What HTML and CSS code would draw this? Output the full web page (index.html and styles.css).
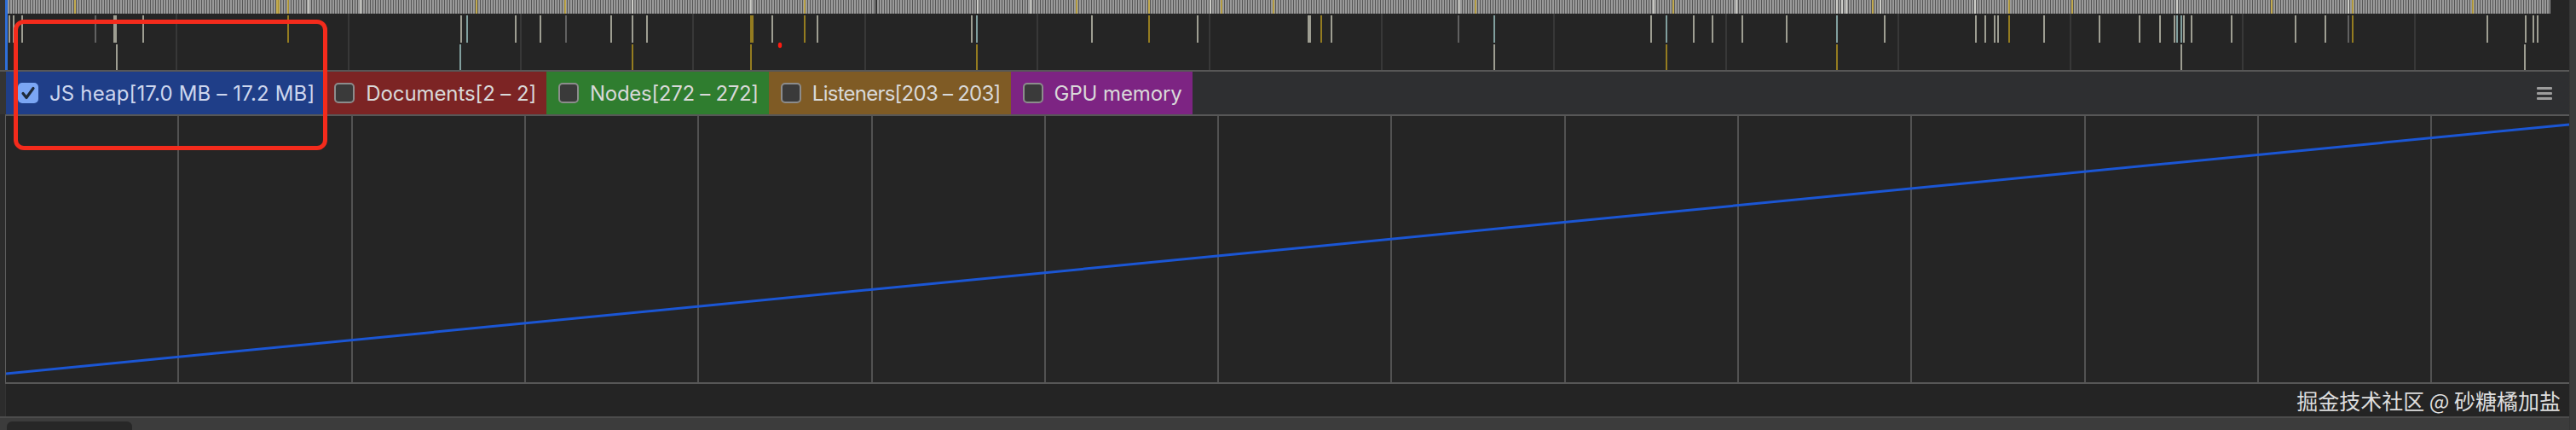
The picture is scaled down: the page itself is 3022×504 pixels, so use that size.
FILE: index.html
```html
<!DOCTYPE html>
<html lang="zh">
<head>
<meta charset="utf-8">
<title>Memory panel</title>
<link rel="stylesheet" href="styles.css">
</head>
<body>
<div class="page">
  <div class="main">
    <div class="timeline">
      <div class="timeline-edge"></div>
      <div class="timeline-cursor"></div>
      <svg class="timeline-canvas" width="3005" height="82" viewBox="9 0 3005 82">
        <defs>
          <pattern id="stripes" x="0" y="0" width="3" height="16" patternUnits="userSpaceOnUse">
            <rect x="0" y="0" width="2" height="16" fill="#9a9a9a"/>
            <rect x="2" y="0" width="1" height="16" fill="#565656"/>
          </pattern>
        </defs>
        <rect x="9" y="0" width="3005" height="82" fill="#252525"/>
        <rect x="9" y="0" width="2983" height="16" fill="url(#stripes)"/>
        <g class="ov-yellow" stroke="#e0b81e" stroke-width="1.2">
          <line x1="88" y1="0" x2="88" y2="16"/><line x1="325" y1="0" x2="325" y2="16"/><line x1="327" y1="0" x2="327" y2="16"/>
          <line x1="338" y1="0" x2="338" y2="16"/><line x1="559" y1="0" x2="559" y2="16"/><line x1="663" y1="0" x2="663" y2="16"/>
          <line x1="944" y1="0" x2="944" y2="16"/><line x1="1263" y1="0" x2="1263" y2="16"/><line x1="1348" y1="0" x2="1348" y2="16"/>
          <line x1="1433" y1="0" x2="1433" y2="16"/><line x1="1494" y1="0" x2="1494" y2="16"/><line x1="1731" y1="0" x2="1731" y2="16"/>
          <line x1="1963" y1="0" x2="1963" y2="16"/><line x1="2197" y1="0" x2="2197" y2="16"/><line x1="2357" y1="0" x2="2357" y2="16"/>
          <line x1="2431" y1="0" x2="2431" y2="16"/><line x1="2665" y1="0" x2="2665" y2="16"/><line x1="2760" y1="0" x2="2760" y2="16"/>
          <line x1="2901" y1="0" x2="2901" y2="16"/>
        </g>
        <g stroke="#f2f2ea" stroke-width="1.2">
          <line x1="362" y1="0" x2="362" y2="16"/><line x1="423" y1="0" x2="423" y2="16"/><line x1="742" y1="0" x2="742" y2="16"/>
          <line x1="881" y1="0" x2="881" y2="16"/><line x1="1147" y1="0" x2="1147" y2="16"/><line x1="1209" y1="0" x2="1209" y2="16"/>
          <line x1="1420" y1="0" x2="1420" y2="16"/><line x1="1712" y1="0" x2="1712" y2="16"/><line x1="1940" y1="0" x2="1940" y2="16"/>
          <line x1="2037" y1="0" x2="2037" y2="16"/><line x1="2155" y1="0" x2="2155" y2="16"/><line x1="2161" y1="0" x2="2161" y2="16"/>
          <line x1="2166" y1="0" x2="2166" y2="16"/><line x1="2206" y1="0" x2="2206" y2="16"/><line x1="2317" y1="0" x2="2317" y2="16"/>
          <line x1="2554" y1="0" x2="2554" y2="16"/><line x1="2755" y1="0" x2="2755" y2="16"/>
        </g>
        <line x1="1028" y1="0" x2="1028" y2="16" stroke="#333" stroke-width="2"/>
        <g stroke="#383838" stroke-width="2">
          <line x1="207" y1="16" x2="207" y2="82"/><line x1="409" y1="16" x2="409" y2="82"/><line x1="611" y1="16" x2="611" y2="82"/>
          <line x1="813" y1="16" x2="813" y2="82"/><line x1="1015" y1="16" x2="1015" y2="82"/><line x1="1217" y1="16" x2="1217" y2="82"/>
          <line x1="1419" y1="16" x2="1419" y2="82"/><line x1="1621" y1="16" x2="1621" y2="82"/><line x1="1823" y1="16" x2="1823" y2="82"/>
          <line x1="2025" y1="16" x2="2025" y2="82"/><line x1="2227" y1="16" x2="2227" y2="82"/><line x1="2429" y1="16" x2="2429" y2="82"/>
          <line x1="2631" y1="16" x2="2631" y2="82"/><line x1="2833" y1="16" x2="2833" y2="82"/>
        </g>
        <g stroke="#f0f0dc" stroke-width="1.2">
          <line x1="11" y1="18" x2="11" y2="50"/><line x1="16" y1="18" x2="16" y2="50"/><line x1="26" y1="18" x2="26" y2="50"/>
          <line x1="134" y1="18" x2="134" y2="50"/><line x1="136" y1="18" x2="136" y2="50"/><line x1="168" y1="18" x2="168" y2="50"/>
          <line x1="541" y1="18" x2="541" y2="50"/><line x1="605" y1="18" x2="605" y2="50"/><line x1="634" y1="18" x2="634" y2="50"/>
          <line x1="717" y1="18" x2="717" y2="50"/><line x1="742" y1="18" x2="742" y2="50"/><line x1="759" y1="18" x2="759" y2="50"/>
          <line x1="906" y1="18" x2="906" y2="50"/><line x1="959" y1="18" x2="959" y2="50"/><line x1="1140" y1="18" x2="1140" y2="50"/>
          <line x1="1281" y1="18" x2="1281" y2="50"/><line x1="1405" y1="18" x2="1405" y2="50"/><line x1="1535" y1="18" x2="1535" y2="50"/>
          <line x1="1537" y1="18" x2="1537" y2="50"/><line x1="1562" y1="18" x2="1562" y2="50"/><line x1="1937" y1="18" x2="1937" y2="50"/>
          <line x1="1987" y1="18" x2="1987" y2="50"/><line x1="2009" y1="18" x2="2009" y2="50"/><line x1="2044" y1="18" x2="2044" y2="50"/>
          <line x1="2096" y1="18" x2="2096" y2="50"/><line x1="2211" y1="18" x2="2211" y2="50"/><line x1="2318" y1="18" x2="2318" y2="50"/>
          <line x1="2329" y1="18" x2="2329" y2="50"/><line x1="2340" y1="18" x2="2340" y2="50"/><line x1="2344" y1="18" x2="2344" y2="50"/>
          <line x1="2398" y1="18" x2="2398" y2="50"/><line x1="2463" y1="18" x2="2463" y2="50"/><line x1="2510" y1="18" x2="2510" y2="50"/>
          <line x1="2534" y1="18" x2="2534" y2="50"/><line x1="2551" y1="18" x2="2551" y2="50"/><line x1="2562" y1="18" x2="2562" y2="50"/>
          <line x1="2571" y1="18" x2="2571" y2="50"/><line x1="2618" y1="18" x2="2618" y2="50"/><line x1="2693" y1="18" x2="2693" y2="50"/>
          <line x1="2728" y1="18" x2="2728" y2="50"/><line x1="2918" y1="18" x2="2918" y2="50"/><line x1="2963" y1="18" x2="2963" y2="50"/>
          <line x1="2972" y1="18" x2="2972" y2="50"/><line x1="2977" y1="18" x2="2977" y2="50"/>
        </g>
        <g stroke="#8a8a8a" stroke-width="1.2">
          <line x1="112" y1="18" x2="112" y2="50"/><line x1="664" y1="18" x2="664" y2="50"/>
          <line x1="1711" y1="18" x2="1711" y2="50"/><line x1="2755" y1="18" x2="2755" y2="50"/>
        </g>
        <g stroke="#e0b81e" stroke-width="1.2">
          <line x1="338" y1="18" x2="338" y2="50"/><line x1="881" y1="18" x2="881" y2="50"/><line x1="883" y1="18" x2="883" y2="50"/>
          <line x1="944" y1="18" x2="944" y2="50"/><line x1="1348" y1="18" x2="1348" y2="50"/><line x1="1550" y1="18" x2="1550" y2="50"/>
          <line x1="2357" y1="18" x2="2357" y2="50"/><line x1="2760" y1="18" x2="2760" y2="50"/>
        </g>
        <g stroke="#bff2f0" stroke-width="1.2">
          <line x1="548" y1="18" x2="548" y2="50"/><line x1="1146" y1="18" x2="1146" y2="50"/><line x1="1753" y1="18" x2="1753" y2="50"/>
          <line x1="1955" y1="18" x2="1955" y2="50"/><line x1="2155" y1="18" x2="2155" y2="50"/><line x1="2554" y1="18" x2="2554" y2="50"/>
          <line x1="2559" y1="18" x2="2559" y2="50"/>
        </g>
        <g stroke="#f0f0dc" stroke-width="1.2">
          <line x1="137" y1="52" x2="137" y2="82"/><line x1="1753" y1="52" x2="1753" y2="82"/>
          <line x1="2559" y1="52" x2="2559" y2="82"/><line x1="2962" y1="52" x2="2962" y2="82"/>
        </g>
        <line x1="540" y1="52" x2="540" y2="82" stroke="#bff2f0" stroke-width="1.2"/>
        <g stroke="#e0b81e" stroke-width="1.2">
          <line x1="742" y1="52" x2="742" y2="82"/><line x1="881" y1="52" x2="881" y2="82"/><line x1="1146" y1="52" x2="1146" y2="82"/>
          <line x1="1955" y1="52" x2="1955" y2="82"/><line x1="2155" y1="52" x2="2155" y2="82"/>
        </g>
        <ellipse cx="915" cy="53" rx="2.2" ry="3.2" fill="#ff1a10"/>
      </svg>
    </div>

    <div class="legend">
      <div class="counters">
        <label class="chip chip-heap"><span class="box box-checked"><svg width="24" height="24" viewBox="0 0 24 24"><path d="M6 12.5 L10 17.5 L18 6.5" fill="none" stroke="#1e2a3a" stroke-width="3.2" stroke-linecap="round" stroke-linejoin="round"/></svg></span><span class="chip-text">JS heap[17.0 MB – 17.2 MB]</span></label>
        <label class="chip chip-docs"><span class="box"></span><span class="chip-text">Documents[2 – 2]</span></label>
        <label class="chip chip-nodes"><span class="box"></span><span class="chip-text">Nodes[272 – 272]</span></label>
        <label class="chip chip-listeners"><span class="box"></span><span class="chip-text">Listeners[203 – 203]</span></label>
        <label class="chip chip-gpu"><span class="box"></span><span class="chip-text">GPU memory</span></label>
      </div>
      <div class="menu-icon"><span></span><span></span><span></span></div>
    </div>

    <div class="chart">
      <svg class="chart-line" viewBox="0 0 3007 312" preserveAspectRatio="none">
        <line x1="0" y1="302" x2="3007" y2="10" stroke="#1b56d4" stroke-width="3"/>
      </svg>
    </div>

    <div class="footer">
      <span class="watermark">掘金技术社区 @ 砂糖橘加盐</span>
    </div>

    <div class="statusbar">
      <div class="tab"></div>
    </div>
  </div>
  <div class="scrollbar"></div>

  <div class="highlight"></div>
</div>
</body>
</html>
```

FILE: styles.css
```css
* {
  box-sizing: border-box;
}

html, body {
  margin: 0;
  padding: 0;
  background: #2c2c2c;
}

.page {
  position: relative;
  width: 3022px;
  height: 504px;
  display: flex;
  overflow: hidden;
  font-family: Inter, "Liberation Sans", Arial, sans-serif;
}

.main {
  flex: 1;
  display: flex;
  flex-direction: column;
  min-width: 0;
}

.scrollbar {
  width: 8px;
  background: #3c3c3c;
  border-left: 1px solid #353535;
}

/* timeline overview */
.timeline {
  height: 82px;
  display: flex;
}

.timeline-edge {
  width: 6px;
  background: #343434;
}

.timeline-cursor {
  width: 3px;
  background: #2f6fd8;
}

.timeline-canvas {
  display: block;
  flex: 1;
}

/* legend */
.legend {
  height: 52px;
  border-top: 2px solid #575757;
  background: #2e2f31;
  display: flex;
  align-items: stretch;
  justify-content: space-between;
  padding-left: 7px;
  box-shadow: inset 7px 0 0 #343434;
}

.counters {
  display: flex;
}

.chip {
  display: flex;
  align-items: center;
  gap: 13px;
  padding: 0 12px 0 14px;
  color: #d9d9d9;
  font-size: 24px;
  letter-spacing: -0.1px;
  white-space: nowrap;
}

.chip-heap {
  background: #1f3e88;
  color: #cdd6ee;
  letter-spacing: 0.15px;
}

.chip-docs {
  background: #7c2424;
  padding-left: 11px;
}

.chip-nodes {
  background: #2f7d2f;
  letter-spacing: -0.3px;
}

.chip-listeners {
  background: #7f5b25;
  letter-spacing: -0.75px;
}

.chip-gpu {
  background: #7d2483;
}

.box {
  width: 24px;
  height: 24px;
  border-radius: 5px;
  border: 2px solid #8c8c8c;
  background: #3a3a3a;
  flex: none;
  display: flex;
  align-items: center;
  justify-content: center;
}

.box-checked {
  border: none;
  background: #7ba6f4;
}

.box svg {
  display: block;
}

.menu-icon {
  display: flex;
  flex-direction: column;
  justify-content: center;
  gap: 3px;
  padding-right: 20px;
}

.menu-icon span {
  display: block;
  width: 18px;
  height: 3px;
  background: #9d9d9d;
  border-radius: 1px;
}

/* chart */
.chart {
  height: 316px;
  border-top: 2px solid #575757;
  border-bottom: 2px solid #575757;
  margin-left: 6px;
  border-left: 1px solid #5e5e5e;
  background-color: #252525;
  background-image: repeating-linear-gradient(to right, transparent 0 201.3px, #525252 201.3px 203.3px);
  box-shadow: -6px 0 0 #2c2c2c;
}

.chart-line {
  display: block;
  width: 100%;
  height: 100%;
}

/* footer */
.footer {
  height: 38px;
  background: #242424;
  margin-left: 6px;
  border-left: 1px solid #333;
  display: flex;
  align-items: center;
  justify-content: flex-end;
  padding-right: 10px;
}

.watermark {
  font-family: "Noto Sans CJK SC", "Noto Sans", sans-serif;
  font-size: 25px;
  color: #dedede;
  line-height: 1;
}

.statusbar {
  flex: 1;
  border-top: 2px solid #4c4c4c;
  background: #3c3c3c;
  display: flex;
  align-items: flex-end;
  padding-left: 8px;
}

.tab {
  width: 147px;
  height: 10px;
  background: #272727;
  border-radius: 6px 6px 0 0;
}

/* annotation overlay */
.highlight {
  position: absolute;
  left: 16px;
  top: 23px;
  width: 368px;
  height: 153px;
  border: 5px solid #f42b1c;
  border-radius: 12px;
  pointer-events: none;
}
```
